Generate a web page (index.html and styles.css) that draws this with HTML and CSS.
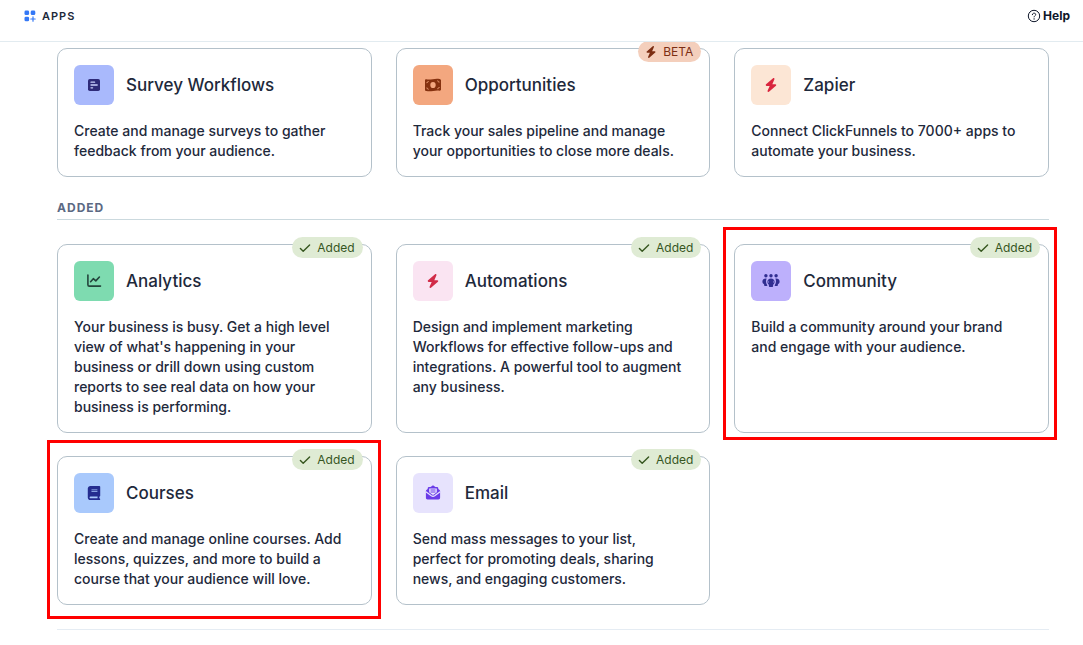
FILE: index.html
```html
<!DOCTYPE html>
<html lang="en">
<head>
    <meta charset="UTF-8">
    <meta name="viewport" content="width=device-width, initial-scale=1.0">
    <title>Apps</title>
    <link rel="stylesheet" href="styles.css">
</head>
<body>
<!-- Shared icons -->
<svg class="sprite" aria-hidden="true">
    <symbol id="bolt" viewBox="0 0 448 512">
        <path d="M349.4 44.6c5.9-13.7 1.5-29.7-10.6-38.5s-28.6-8-39.9 1.8l-256 224c-10 8.8-13.6 22.9-8.9 35.3S50.7 288 64 288H175.5L98.6 467.4c-5.9 13.7-1.5 29.7 10.6 38.5s28.6 8 39.9-1.8l256-224c10-8.8 13.6-22.9 8.9-35.3s-16.6-20.7-30-20.7H272.5L349.4 44.6z"/>
    </symbol>
    <symbol id="check" viewBox="0 0 12 12">
        <path d="M1.4 6.4l2.800 2.900L10.600 3" fill="none" stroke="currentColor" stroke-width="1.4" stroke-linecap="round" stroke-linejoin="round"/>
    </symbol>
</svg>

<header class="topbar">
    <div class="topbar-title">
        <svg class="apps-icon" viewBox="0 0 12 12" aria-hidden="true">
            <rect x="0.5" y="0.5" width="4.6" height="4.6" rx="1.4"/>
            <rect x="6.7" y="0.5" width="4.6" height="4.6" rx="1.4"/>
            <rect x="0.5" y="6.7" width="4.6" height="4.6" rx="1.4"/>
            <path d="M9 6.8v4.4M6.8 9h4.4" fill="none" stroke="currentColor" stroke-width="1.2" stroke-linecap="round"/>
        </svg>
        <h1>APPS</h1>
    </div>
    <a href="#" class="help-link">
        <svg class="help-icon" viewBox="0 0 14 14" aria-hidden="true">
            <circle cx="7" cy="7" r="5.7" fill="none" stroke="currentColor"/>
            <path d="M5.3 5.7c0-2.1 3.4-2.1 3.4-.1 0 1.1-1.6 1.2-1.6 2.3" fill="none" stroke="currentColor" stroke-linecap="round"/>
            <circle cx="7.1" cy="9.9" r="0.7"/>
        </svg>
        Help
    </a>
</header>

<main class="content">
    <section class="app-grid">
        <a href="#" class="app-card">
            <div class="app-head">
                <span class="app-icon survey">
                    <svg viewBox="0 0 16 16" aria-hidden="true">
                        <rect x="2" y="2" width="12" height="12" rx="1.8"/>
                        <path d="M5 5.2h3.6M5 8h6.2M5 10.8h1.6" fill="none" stroke="#c9cffb" stroke-width="1.3" stroke-linecap="round"/>
                    </svg>
                </span>
                <h2>Survey Workflows</h2>
            </div>
            <p>Create and manage surveys to gather feedback from your audience.</p>
        </a>
        <a href="#" class="app-card">
            <span class="badge beta"><svg viewBox="0 0 12 12" aria-hidden="true"><use href="#bolt"/></svg>BETA</span>
            <div class="app-head">
                <span class="app-icon opportunities">
                    <svg viewBox="0 0 16 16" aria-hidden="true">
                        <path fill-rule="evenodd" d="M0 3.4c0-.9.7-1.2 1.4-1.1C5.8 3.2 9.7.9 14.6 1.9c.8.1 1.4.7 1.4 1.4v9.3c0 .9-.7 1.2-1.4 1.1-4.4-.9-8.3 1.4-13.2.4C.6 14 0 13.500 0 12.700zM8 4.900a2.700 3.100 0 1 0 0 6.200 2.700 3.100 0 1 0 0-6.200z"/>
                        <path d="M1.5 5.700c1 0 1.700-.7 1.700-1.700M12.700 3.500c0 .9.700 1.600 1.700 1.600M1.500 11c1 0 1.700.7 1.700 1.600M12.800 12.200c0-1 .7-1.700 1.700-1.700" fill="none" stroke="#f3a77f" stroke-width="1"/>
                    </svg>
                </span>
                <h2>Opportunities</h2>
            </div>
            <p>Track your sales pipeline and manage your opportunities to close more deals.</p>
        </a>
        <a href="#" class="app-card">
            <div class="app-head">
                <span class="app-icon zapier">
                    <svg viewBox="0 0 16 16" aria-hidden="true"><use href="#bolt" x="1" y="1" width="14" height="14"/></svg>
                </span>
                <h2>Zapier</h2>
            </div>
            <p>Connect ClickFunnels to 7000+ apps to automate your business.</p>
        </a>
    </section>

    <h3 class="section-title">ADDED</h3>

    <section class="app-grid">
        <a href="#" class="app-card">
            <span class="badge added"><svg viewBox="0 0 12 12" aria-hidden="true"><use href="#check"/></svg>Added</span>
            <div class="app-head">
                <span class="app-icon analytics">
                    <svg viewBox="0 0 16 16" aria-hidden="true">
                        <path d="M1.9 2v9.7c0 .9.5 1.4 1.4 1.4H14.5M4.6 8.7l2.7-3 2.5 2.2L13.4 4" fill="none" stroke="currentColor" stroke-width="1.6" stroke-linecap="round" stroke-linejoin="round"/>
                    </svg>
                </span>
                <h2>Analytics</h2>
            </div>
            <p>Your business is busy. Get a high level view of what's happening in your business or drill down using custom reports to see real data on how your business is performing.</p>
        </a>
        <a href="#" class="app-card">
            <span class="badge added"><svg viewBox="0 0 12 12" aria-hidden="true"><use href="#check"/></svg>Added</span>
            <div class="app-head">
                <span class="app-icon automations">
                    <svg viewBox="0 0 16 16" aria-hidden="true"><use href="#bolt" x="1" y="1" width="14" height="14"/></svg>
                </span>
                <h2>Automations</h2>
            </div>
            <p>Design and implement marketing Workflows for effective follow-ups and integrations. A powerful tool to augment any business.</p>
        </a>
        <a href="#" class="app-card marked marked-community">
            <span class="badge added"><svg viewBox="0 0 12 12" aria-hidden="true"><use href="#check"/></svg>Added</span>
            <div class="app-head">
                <span class="app-icon community">
                    <svg class="wide" viewBox="0 0 18 16" aria-hidden="true">
                        <circle cx="3.9" cy="2.800" r="1.7"/>
                        <circle cx="9" cy="2.800" r="1.7"/>
                        <circle cx="14.1" cy="2.800" r="1.7"/>
                        <path d="M4.6 5.500C2 5.200.4 6.600.4 8.500c0 1.300.7 2.300 1.700 2.800V12c0 .6.5 1 1.100 1h1.400c.4 0 .7-.2.9-.5-1.700-2-1.800-4.800-.9-7z"/>
                        <path d="M13.400 5.500c2.600-.3 4.200 1.100 4.200 3 0 1.300-.7 2.300-1.700 2.800V12c0 .6-.5 1-1.100 1h-1.400c-.4 0-.7-.2-.9-.5 1.700-2 1.800-4.800.9-7z"/>
                        <path fill-rule="evenodd" d="M9 5.500c-2.200 0-3.600 1.500-3.600 3.300 0 1.300.6 2.300 1.500 2.900v1.200c0 .6.5 1.100 1.100 1.100h2c.6 0 1.100-.5 1.100-1.100v-1.200c.9-.6 1.500-1.600 1.500-2.900C12.600 7 11.200 5.500 9 5.500zM6.900 7.500v2.700c-.7-.8-.7-1.900 0-2.700zm4.200 0c.7.8.7 1.900 0 2.700z"/>
                    </svg>
                </span>
                <h2>Community</h2>
            </div>
            <p>Build a community around your brand and engage with your audience.</p>
        </a>
        <a href="#" class="app-card marked marked-courses">
            <span class="badge added"><svg viewBox="0 0 12 12" aria-hidden="true"><use href="#check"/></svg>Added</span>
            <div class="app-head">
                <span class="app-icon courses">
                    <svg viewBox="-32 -32 512 576" aria-hidden="true">
                        <path d="M96 0C43 0 0 43 0 96V416c0 53 43 96 96 96H384h32c17.7 0 32-14.3 32-32s-14.3-32-32-32V384c17.7 0 32-14.3 32-32V32c0-17.7-14.3-32-32-32H384 96zm0 384H352v64H96c-17.7 0-32-14.3-32-32s14.3-32 32-32zm32-240c0-8.8 7.2-16 16-16H336c8.8 0 16 7.2 16 16s-7.2 16-16 16H144c-8.8 0-16-7.2-16-16zm16 48H336c8.8 0 16 7.2 16 16s-7.2 16-16 16H144c-8.8 0-16-7.2-16-16s7.2-16 16-16z"/>
                    </svg>
                </span>
                <h2>Courses</h2>
            </div>
            <p>Create and manage online courses. Add lessons, quizzes, and more to build a course that your audience will love.</p>
        </a>
        <a href="#" class="app-card">
            <span class="badge added"><svg viewBox="0 0 12 12" aria-hidden="true"><use href="#check"/></svg>Added</span>
            <div class="app-head">
                <span class="app-icon email">
                    <svg viewBox="0 0 16 16" aria-hidden="true">
                        <path d="M5.500 2 7 .900c.6-.4 1.400-.4 2 0L10.500 2H12c.7 0 1.300.6 1.300 1.300v.7l1.300 1c.3.3.5.6.5 1v6.800c0 .9-.7 1.600-1.600 1.600h-11C1.600 14.400.9 13.700.9 12.800V6c0-.4.2-.7.5-1l1.300-1v-.7C2.700 2.600 3.300 2 4 2z"/>
                        <path d="M4.200 3.500h7.600v3.800L8.900 9.400c-.5.4-1.300.4-1.800 0L4.200 7.300z" fill="#e7e3fd"/>
                        <path d="M.900 6.700l5.400 4c1 .7 2.400.7 3.400 0l5.400-4" fill="none" stroke="#e7e3fd" stroke-width="1.200"/>
                        <path d="M5.500 5h5M5.500 7h5" fill="none" stroke="currentColor" stroke-width="1"/>
                    </svg>
                </span>
                <h2>Email</h2>
            </div>
            <p>Send mass messages to your list, perfect for promoting deals, sharing news, and engaging customers.</p>
        </a>
    </section>
    <hr class="divider">
</main>
</body>
</html>
```

FILE: styles.css
```css
* {
    box-sizing: border-box;
}

body {
    margin: 0;
    background-color: #fff;
    color: #1e293b;
    font-family: Inter, "Liberation Sans", sans-serif;
    font-size: 14px;
    line-height: 20px;
}

h1, h2, h3, p {
    margin: 0;
}

.sprite {
    display: none;
}

svg {
    fill: currentColor;
}

/* Top bar */
.topbar {
    position: sticky;
    top: 0;
    z-index: 2;
    display: flex;
    justify-content: space-between;
    align-items: center;
    padding: 6px 13px 15px 24px;
    background-color: #fff;
    border-bottom: 1px solid #e2ebf0;
}

.topbar-title {
    display: flex;
    align-items: center;
    gap: 6px;
}

.topbar-title h1 {
    font-size: 11px;
    line-height: 20px;
    font-weight: 600;
    letter-spacing: 1px;
}

.apps-icon {
    width: 12px;
    height: 12px;
    color: #3478f6;
}

.help-link {
    display: flex;
    align-items: center;
    gap: 2px;
    color: #0f172a;
    font-size: 12px;
    font-weight: 700;
    text-decoration: none;
}

.help-icon {
    width: 14px;
    height: 14px;
}

/* App cards */
.content {
    padding: 6px 34px 15px 57px;
}

.app-grid {
    display: grid;
    grid-template-columns: repeat(3, 1fr);
    gap: 23px 24px;
}

.app-card {
    position: relative;
    padding: 16px 16px 15px;
    border: 1px solid #b4c1ca;
    border-radius: 10px;
    color: inherit;
    text-decoration: none;
}

.app-card p {
    margin-top: 16px;
    padding-right: 8px;
    font-weight: 500;
}

.app-head {
    display: flex;
    align-items: center;
    gap: 12px;
}

.app-head h2 {
    font-size: 17px;
    line-height: 24px;
    font-weight: 500;
}

.app-icon {
    display: flex;
    justify-content: center;
    align-items: center;
    width: 40px;
    height: 40px;
    border-radius: 6px;
}

.app-icon svg {
    width: 16px;
    height: 16px;
}

.app-icon .wide {
    width: 18px;
}

.survey {
    background-color: #a9b9fc;
    color: #2e2a78;
}

.opportunities {
    background-color: #f3a77f;
    color: #85310f;
}

.zapier {
    background-color: #fce6d5;
    color: #d9263e;
}

.analytics {
    background-color: #7edbb0;
    color: #23443b;
}

.automations {
    background-color: #fae4f2;
    color: #d12b48;
}

.community {
    background-color: #bdb0fc;
    color: #312e91;
}

.courses {
    background-color: #a9c9fc;
    color: #242c8f;
}

.email {
    background-color: #e7e3fd;
    color: #6a3be8;
}

.badge {
    position: absolute;
    top: -8px;
    right: 8px;
    display: flex;
    align-items: center;
    gap: 6px;
    padding: 0 8px 0 7px;
    border-radius: 11px;
    font-size: 12px;
    line-height: 21px;
}

.badge svg {
    width: 12px;
    height: 12px;
}

.added {
    background-color: #dfebd4;
    color: #36561f;
}

.beta {
    background-color: #f4cfbc;
    color: #7c2d12;
}

.section-title {
    margin: 24px 0;
    padding-bottom: 4px;
    border-bottom: 1px solid #cbd9de;
    color: #5b6983;
    font-size: 12px;
    line-height: 14px;
    font-weight: 700;
    letter-spacing: 1px;
}

.divider {
    margin: 24px 0 0;
    border: 0;
    border-top: 1px solid #e5ecf3;
}

/* Red highlight frames */
.marked::after {
    content: "";
    position: absolute;
    border: 3px solid #f00;
    pointer-events: none;
}

.marked-community::after {
    inset: -18px -9px -8px -12px;
}

.marked-courses::after {
    inset: -17px -10px -15px -11px;
}
```
